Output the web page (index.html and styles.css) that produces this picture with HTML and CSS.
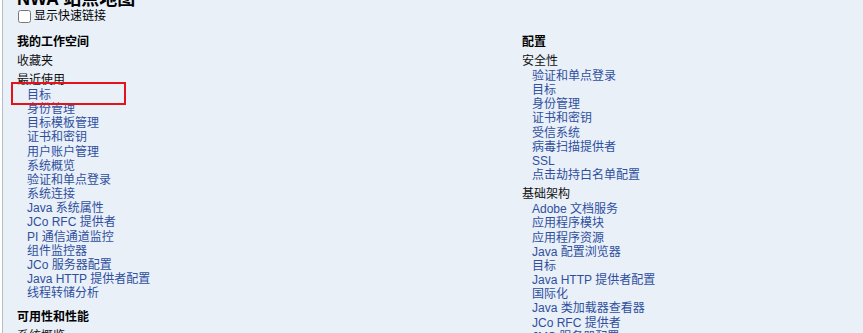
FILE: index.html
```html
<!DOCTYPE html>
<html lang="zh">
<head>
    <meta charset="UTF-8">
    <meta name="viewport" content="width=device-width, initial-scale=1.0">
    <title>NWA 站点地图</title>
    <link rel="stylesheet" href="styles.css">
</head>
<body>

    <div class="page">
        <h1 class="title">NWA 站点地图</h1>
        <label class="quick-links"><input type="checkbox"> 显示快速链接</label>

        <div class="sitemap">
            <div class="column">
                <h2>我的工作空间</h2>
                <div class="group">
                    <div class="group-title">收藏夹</div>
                </div>
                <div class="group">
                    <div class="group-title">最近使用</div>
                    <ul class="links">
                        <li class="marked"><a href="#">目标</a><span class="mark"></span></li>
                        <li><a href="#">身份管理</a></li>
                        <li><a href="#">目标模板管理</a></li>
                        <li><a href="#">证书和密钥</a></li>
                        <li><a href="#">用户账户管理</a></li>
                        <li><a href="#">系统概览</a></li>
                        <li><a href="#">验证和单点登录</a></li>
                        <li><a href="#">系统连接</a></li>
                        <li><a href="#">Java 系统属性</a></li>
                        <li><a href="#">JCo RFC 提供者</a></li>
                        <li><a href="#">PI 通信通道监控</a></li>
                        <li><a href="#">组件监控器</a></li>
                        <li><a href="#">JCo 服务器配置</a></li>
                        <li><a href="#">Java HTTP 提供者配置</a></li>
                        <li><a href="#">线程转储分析</a></li>
                    </ul>
                </div>

                <h2 class="next">可用性和性能</h2>
                <div class="group">
                    <div class="group-title">系统概览</div>
                    <ul class="links">
                        <li><a href="#">系统信息</a></li>
                        <li><a href="#">进程概览</a></li>
                    </ul>
                </div>
            </div>

            <div class="column">
                <h2>配置</h2>
                <div class="group">
                    <div class="group-title">安全性</div>
                    <ul class="links">
                        <li><a href="#">验证和单点登录</a></li>
                        <li><a href="#">目标</a></li>
                        <li><a href="#">身份管理</a></li>
                        <li><a href="#">证书和密钥</a></li>
                        <li><a href="#">受信系统</a></li>
                        <li><a href="#">病毒扫描提供者</a></li>
                        <li><a href="#">SSL</a></li>
                        <li><a href="#">点击劫持白名单配置</a></li>
                    </ul>
                </div>
                <div class="group">
                    <div class="group-title">基础架构</div>
                    <ul class="links">
                        <li><a href="#">Adobe 文档服务</a></li>
                        <li><a href="#">应用程序模块</a></li>
                        <li><a href="#">应用程序资源</a></li>
                        <li><a href="#">Java 配置浏览器</a></li>
                        <li><a href="#">目标</a></li>
                        <li><a href="#">Java HTTP 提供者配置</a></li>
                        <li><a href="#">国际化</a></li>
                        <li><a href="#">Java 类加载器查看器</a></li>
                        <li><a href="#">JCo RFC 提供者</a></li>
                        <li><a href="#">JMS 服务器配置</a></li>
                        <li><a href="#">日志和跟踪配置</a></li>
                    </ul>
                </div>
            </div>
        </div>
    </div>

</body>
</html>
```

FILE: styles.css
```css
html, body {
    margin: 0;
    height: 100%;
    overflow: hidden;
    background: #ffffff;
}
body {
    font-family: "Liberation Sans", "Noto Sans CJK SC", sans-serif;
    font-size: 12px;
    color: #000;
}
.page {
    margin-left: 2px;
    min-height: 100%;
    padding-left: 14px;
    border-left: 1px solid #b4bcc6;
    background: #e9f0f8;
}
.title {
    margin: -11px 0 0;
    font-size: 18px;
    line-height: 20px;
    font-weight: bold;
}
.quick-links {
    display: flex;
    align-items: center;
    height: 14px;
    line-height: 14px;
}
.quick-links input {
    width: 13px;
    height: 13px;
    margin: 1px 3px 0 1px;
}
.sitemap {
    display: grid;
    grid-template-columns: 505px 1fr;
    margin-top: 12px;
}
.column h2 {
    margin: 0;
    font-size: 12px;
    line-height: 14px;
    font-weight: bold;
}
.column h2.next {
    margin-top: 10px;
}
.group {
    margin-top: 5px;
}
.group-title {
    line-height: 14px;
    color: #111;
}
.links {
    list-style: none;
    margin: 1px 0 0;
    padding: 0 0 0 10px;
}
.links li {
    line-height: 14.15px;
}
.links a {
    color: #2f4f9e;
    text-decoration: none;
}
.marked {
    position: relative;
}
.mark {
    position: absolute;
    left: -16px;
    top: -6px;
    width: 111px;
    height: 19px;
    border: 2px solid #e3131b;
}
```
